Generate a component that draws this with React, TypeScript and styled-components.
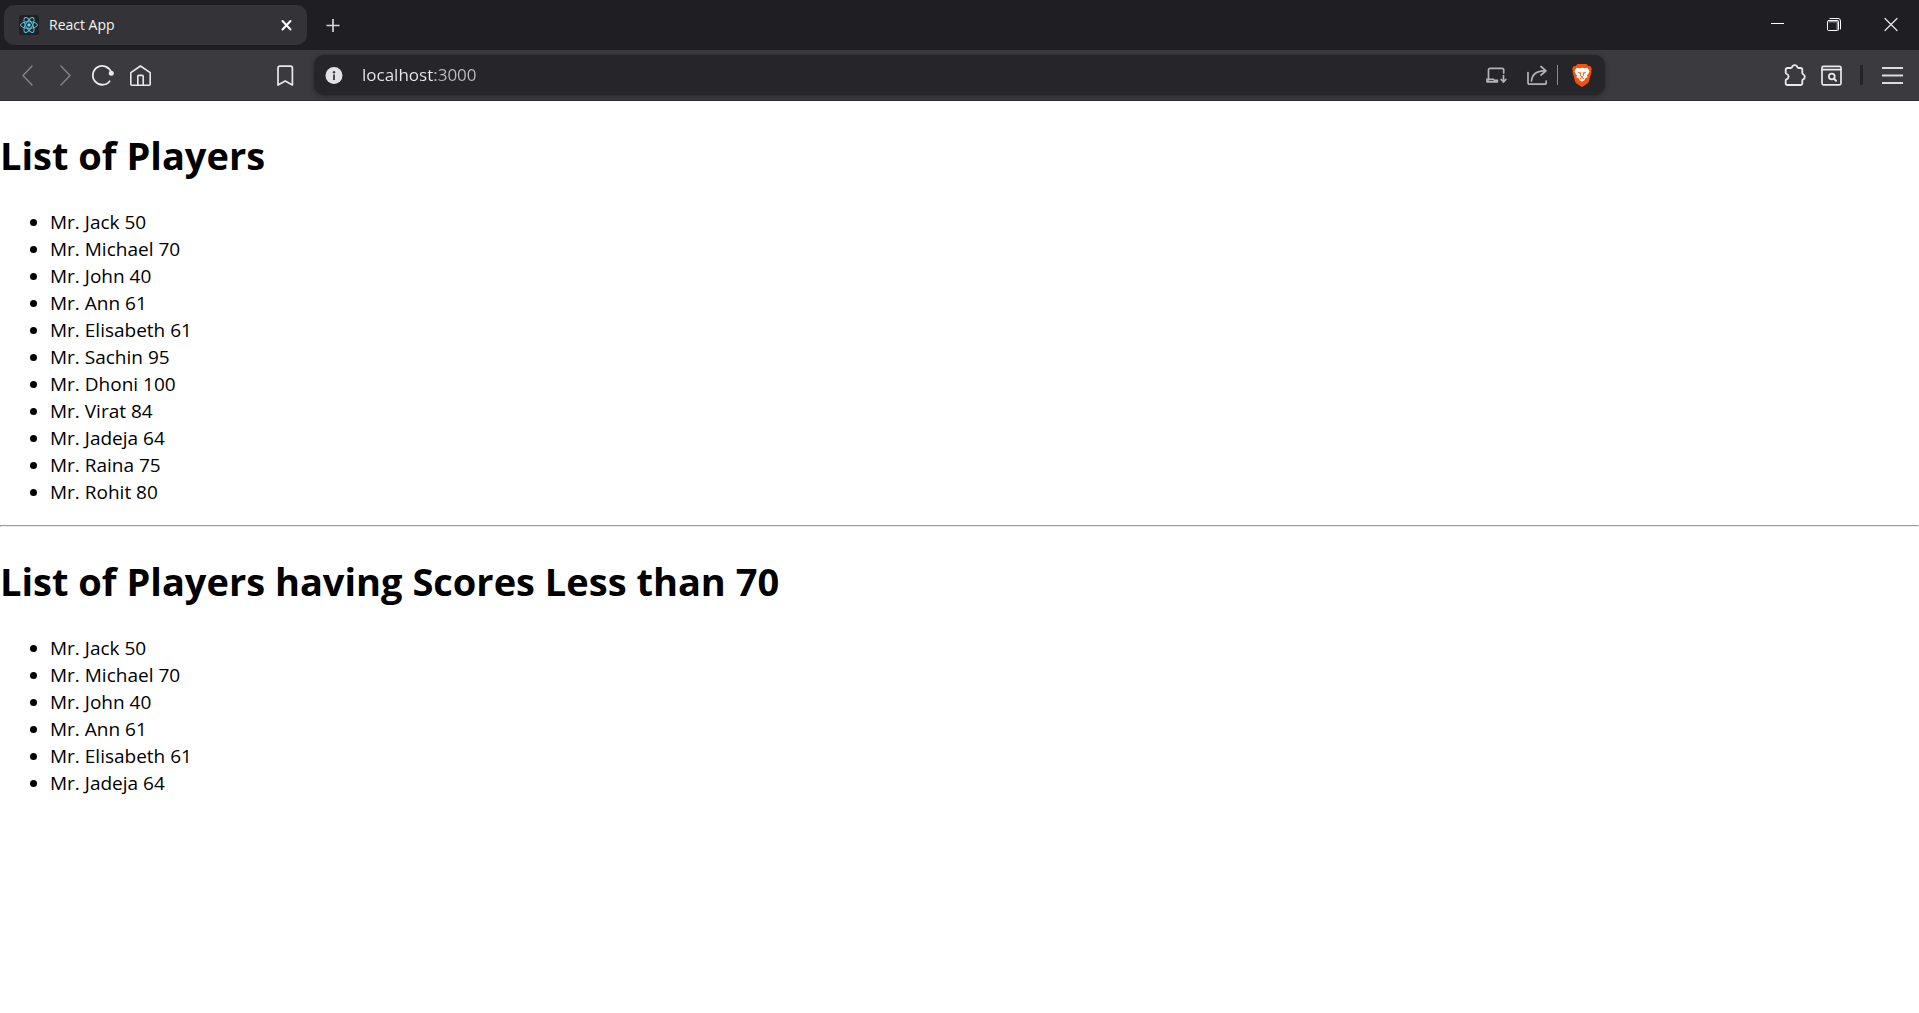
import React from "react";
import styled, { createGlobalStyle } from "styled-components";

const GlobalStyle = createGlobalStyle`
  * { box-sizing: border-box; }
  body {
    margin: 0;
    background: #fff;
    color: #000;
    font-family: "Segoe UI", "Open Sans", "Noto Sans", sans-serif;
    font-size: 19px;
    line-height: 27px;
  }
  button, input { font: inherit; }
`;

const TabStrip = styled.div`
  display: flex;
  align-items: center;
  height: 50px;
  padding-left: 4px;
  background: #1f1e23;
`;

const Tab = styled.div`
  display: flex;
  align-items: center;
  gap: 10px;
  width: 303px;
  height: 40px;
  padding: 0 8px 0 15px;
  border-radius: 10px;
  background: #343337;
  color: #f4f4f6;
  font-size: 14px;
`;

const TabTitle = styled.span`
  flex: 1;
  padding-bottom: 2px;
`;

const IconButton = styled.button<{ $width: number; $color?: string }>`
  display: flex;
  align-items: center;
  justify-content: center;
  width: ${(p) => p.$width}px;
  height: 40px;
  padding: 0;
  border: 0;
  background: transparent;
  color: ${(p) => p.$color ?? "#e9e9ec"};
`;

const WindowControls = styled.div`
  display: flex;
  margin-left: auto;
`;

const Toolbar = styled.div`
  display: grid;
  grid-template-columns: 1fr minmax(0, 1291px) 1fr;
  align-items: center;
  height: 51px;
  border-bottom: 1px solid #2e2d32;
  background: #3b3a3f;
`;

const ToolGroup = styled.div<{ $end?: boolean }>`
  display: flex;
  align-items: center;
  justify-content: ${(p) => (p.$end ? "flex-end" : "space-between")};
  padding: 0 ${(p) => (p.$end ? 9 : 11)}px 0 9px;
`;

const NavButtons = styled.nav`
  display: flex;
`;

const ToolDivider = styled.span`
  width: 3px;
  height: 20px;
  margin: 0 11px;
  border-radius: 1px;
  background: #242328;
`;

const AddressBar = styled.form`
  display: flex;
  align-items: center;
  height: 40px;
  border-radius: 10px;
  background: #26252a;
  box-shadow: 0 1px 5px rgba(0, 0, 0, 0.35);
`;

const AddressInput = styled.input`
  flex: 1;
  min-width: 0;
  padding: 0 0 2px;
  margin-left: 9px;
  border: 0;
  outline: 0;
  background: linear-gradient(to right, #ececef 73px, #bdbcc2 73px) text;
  color: transparent;
  font-size: 17px;
`;

const AddressDivider = styled.span`
  width: 1px;
  height: 20px;
  background: #8b8a90;
`;

const Title = styled.h1`
  margin: 28px 0 27px;
  font-size: 38px;
  font-weight: 700;
  line-height: 53px;
`;

const PlayerList = styled.ul`
  margin: 0 0 19px;
  padding-left: 50px;
`;

const Rule = styled.hr`
  margin: 0;
  border: 1px inset #eee;
`;

type IconProps = { size?: number; stroke?: number; children: React.ReactNode };

const Icon = ({ size = 24, stroke = 1.6, children }: IconProps) => (
  <svg
    width={size}
    height={size}
    viewBox={`0 0 ${size} ${size}`}
    fill="none"
    stroke="currentColor"
    strokeWidth={stroke}
    strokeLinecap="round"
    strokeLinejoin="round"
    aria-hidden="true"
  >
    {children}
  </svg>
);

const ReactIcon = () => (
  <svg width="20" height="20" viewBox="0 0 20 20" fill="none" stroke="#5cc5e0" strokeWidth="1" aria-hidden="true">
    <rect width="20" height="20" rx="2" fill="#222225" stroke="none" />
    <circle cx="10" cy="10" r="1.7" fill="#61dafb" stroke="none" />
    <ellipse cx="10" cy="10" rx="8.4" ry="3.3" />
    <ellipse cx="10" cy="10" rx="8.4" ry="3.3" transform="rotate(60 10 10)" />
    <ellipse cx="10" cy="10" rx="8.4" ry="3.3" transform="rotate(120 10 10)" />
  </svg>
);

const BraveIcon = () => (
  <svg width="20" height="23" viewBox="0 0 20 23" aria-hidden="true">
    <path
      fill="#fb4f0c"
      d="M5.5 0h9l2 2.2 2-.2 1.300 3-.6 2 .3 1-2.600 9.500q-.5 1.500-1.700 2.300L10 23l-5.200-3.200Q3.600 19 3.100 17.500L.5 8l.3-1-.6-2 1.300-3 2 .2z"
    />
    <path
      fill="#fff"
      d="M4.500 3.800l2.700.5L10 3.800l2.800.5 2.700-.5 2 3.400-1 2.200-1.500 1.900.6 1.900-2.600 1.500-.2 1.200L10 17.700l-2.800-1.800-.2-1.200-2.600-1.500.6-1.900-1.500-1.900-1-2.200z"
    />
    <path fill="#fb4f0c" d="M5.200 7.800l3.500.6-.8 1.300zM14.800 7.800l-3.500.6.8 1.300z" />
    <path
      fill="none"
      stroke="#fb4f0c"
      strokeWidth="0.9"
      d="M8.900 8.500l-.7 3 1.800 1.200 1.800-1.200-.7-3M10 12.700v1M7.800 15l2.200-1.300 2.200 1.300"
    />
  </svg>
);

type Player = { name: string; score: number };

const players: Player[] = [
  { name: "Jack", score: 50 },
  { name: "Michael", score: 70 },
  { name: "John", score: 40 },
  { name: "Ann", score: 61 },
  { name: "Elisabeth", score: 61 },
  { name: "Sachin", score: 95 },
  { name: "Dhoni", score: 100 },
  { name: "Virat", score: 84 },
  { name: "Jadeja", score: 64 },
  { name: "Raina", score: 75 },
  { name: "Rohit", score: 80 },
];

const Players = ({ items }: { items: Player[] }) => (
  <PlayerList>
    {items.map((p) => (
      <li key={p.name}>{`Mr. ${p.name} ${p.score}`}</li>
    ))}
  </PlayerList>
);

export default function App() {
  return (
    <>
      <GlobalStyle />
      <header>
        <TabStrip>
          <Tab>
            <ReactIcon />
            <TabTitle>React App</TabTitle>
            <IconButton $width={24} aria-label="Close tab" $color="#fff">
              <Icon stroke={2}><path d="M7.5 8l8 8.500M15.500 8l-8 8.500" /></Icon>
            </IconButton>
          </Tab>
          <IconButton $width={52} aria-label="New tab" $color="#d6d6da">
            <Icon stroke={1.7}><path d="M5.5 12.5h13M12 6v13" strokeLinecap="butt" /></Icon>
          </IconButton>
          <WindowControls>
            <IconButton $width={57} aria-label="Minimize" $color="#fff">
              <Icon stroke={1}><path d="M6 10.5h13" strokeLinecap="butt" /></Icon>
            </IconButton>
            <IconButton $width={57} aria-label="Restore" $color="#fff">
              <Icon stroke={1}>
                <path d="M8 5.5h8q2.5 0 2.5 2.5v8" />
                <rect x="5.5" y="7.5" width="11" height="10" rx="1" />
                <path d="M7 8.7h8.3v8" stroke="#8d8c92" strokeWidth="1.5" strokeLinejoin="miter" />
              </Icon>
            </IconButton>
            <IconButton $width={57} aria-label="Close window">
              <Icon stroke={1.2}><path d="M6 5.5l12 12M18 5.5l-12 12" /></Icon>
            </IconButton>
          </WindowControls>
        </TabStrip>

        <Toolbar>
          <ToolGroup>
            <NavButtons aria-label="Browser navigation">
              <IconButton $width={37} aria-label="Back" $color="#838288">
                <Icon stroke={1.5}><path d="M16 3L7 12.5L16 22" /></Icon>
              </IconButton>
              <IconButton $width={37} aria-label="Forward" $color="#838288">
                <Icon stroke={1.5}><path d="M8 3l9 9.5L8 22" /></Icon>
              </IconButton>
              <IconButton $width={37} aria-label="Reload">
                <Icon stroke={1.8}>
                  <path d="M21.2 9.5A9.4 9.4 0 1 0 19.6 18.2" />
                  <circle cx="21.3" cy="10.3" r="2.5" fill="currentColor" stroke="none" />
                </Icon>
              </IconButton>
              <IconButton $width={37} aria-label="Home">
                <Icon stroke={1.6}>
                  <path d="M3.800 9.6L13.500 3l9.700 6.6V21.2q0 1-1 1H4.800q-1 0-1-1z" />
                  <path d="M10.800 22v-8.700q0-.9.9-.9h3.600q.9 0 .9.9V22" />
                </Icon>
              </IconButton>
            </NavButtons>
            <IconButton $width={36} aria-label="Bookmark this page">
              <Icon stroke={1.7}><path d="M5 22V5.2q0-2 2-2h10.4q2 0 2 2V22l-7.2-4z" /></Icon>
            </IconButton>
          </ToolGroup>

          <AddressBar onSubmit={(e) => e.preventDefault()}>
            <IconButton $width={39} type="button" aria-label="Site information" $color="#e3e2e8">
              <Icon size={20}>
                <circle cx="10" cy="10.5" r="8.5" fill="currentColor" stroke="none" />
                <path d="M10 9.5v5.5" stroke="#3b3a40" strokeWidth="1.8" strokeLinecap="butt" />
                <circle cx="10" cy="7.2" r="1.2" fill="#3b3a40" stroke="none" />
              </Icon>
            </IconButton>
            <AddressInput aria-label="Address" defaultValue="localhost:3000" spellCheck={false} />
            <IconButton $width={42} type="button" aria-label="Install app" $color="#b4b3b9">
              <Icon stroke={1.7}>
                <path d="M4.500 17V7q0-1.700 1.700-1.700H18q1.700 0 1.700 1.700v3" />
                <path d="M3 18.800h10.500M3 18.500v-2.200h6.500l1 1h3M19.500 12.500v6M17.200 16.500l2.300 2.500 2.300-2.500" strokeLinejoin="miter" />
              </Icon>
            </IconButton>
            <IconButton $width={40} type="button" aria-label="Share" $color="#b4b3b9">
              <Icon stroke={1.7}>
                <path d="M3 9.500V19.500q0 1.700 1.700 1.700H19.500q1.700 0 1.700-1.700V18" />
                <path d="M6.500 18q.6-9.800 14-10.300M16 3.500l5 4.300-5 4.200" />
              </Icon>
            </IconButton>
            <AddressDivider />
            <IconButton $width={47} type="button" aria-label="Brave Shields">
              <BraveIcon />
            </IconButton>
          </AddressBar>

          <ToolGroup $end>
            <IconButton $width={36} aria-label="Extensions">
              <Icon stroke={1.8}>
                <path d="M4.500 5H7.800Q8.800 5 9 4.200A2.800 2.800 0 0 1 14.400 4.200Q14.600 5 15.600 5H17.500Q19.300 5 19.300 6.800V9.900Q19.300 10.800 20.200 11.200A2.900 2.900 0 0 1 20.200 16.400Q19.300 16.800 19.300 17.700V20.200Q19.300 22 17.500 22H4.500Q2.700 22 2.700 20.200V17.300Q2.700 16.400 3.800 16.100A2.700 2.700 0 0 0 3.800 11Q2.700 10.700 2.700 9.800V6.800Q2.700 5 4.500 5z" />
              </Icon>
            </IconButton>
            <IconButton $width={36} aria-label="Search tabs">
              <Icon stroke={1.7}>
                <rect x="3" y="3.3" width="19" height="18.5" rx="1.5" />
                <path d="M3 6.700h19" />
                <circle cx="12.8" cy="13.5" r="2.9" strokeWidth="1.8" />
                <path d="M15 15.700l2 2" strokeWidth="2" />
              </Icon>
            </IconButton>
            <ToolDivider />
            <IconButton $width={36} aria-label="Menu" $color="#dcdce0">
              <Icon stroke={1.8}>
                <path d="M2 5h21M2 12.500h21M2 20h21" strokeLinecap="butt" />
              </Icon>
            </IconButton>
          </ToolGroup>
        </Toolbar>
      </header>

      <main>
        <Title>List of Players</Title>
        <Players items={players} />
        <Rule />
        <Title>List of Players having Scores Less than 70</Title>
        <Players items={players.filter((p) => p.score <= 70)} />
      </main>
    </>
  );
}
